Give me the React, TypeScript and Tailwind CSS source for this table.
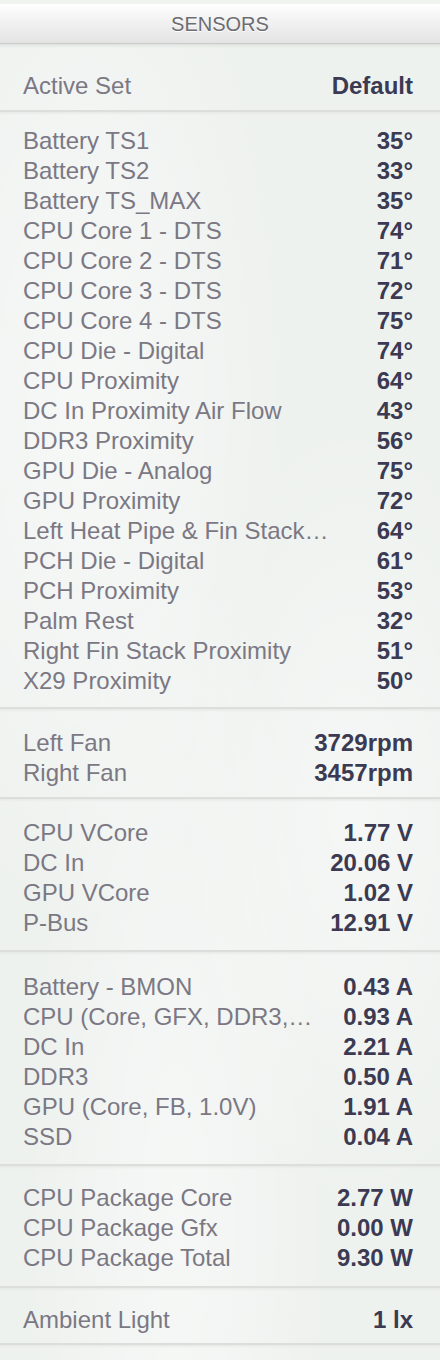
import React from "react";

type Row = [string, string];

const Sep = () => (
  <div className="relative h-[2px] bg-[#dcdedc]">
    <div className="absolute left-0 right-0 top-[2px] h-[3px] bg-gradient-to-b from-[#e6e9e6] to-transparent" />
  </div>
);

const Rows = ({ rows }: { rows: Row[] }) => (
  <div className="flex flex-col">
    {rows.map(([l, v]) => (
      <div key={l} className="flex h-[30px] items-start justify-between pl-[23px] pr-[27px] pt-[4px] leading-[26px]">
        <span className="whitespace-nowrap text-[24px] text-[#7b7884]">{l}</span>
        <span className="whitespace-nowrap text-[24px] font-bold text-[#3b3a52]">{v}</span>
      </div>
    ))}
  </div>
);

const temps: Row[] = [
  ["Battery TS1", "35°"],
  ["Battery TS2", "33°"],
  ["Battery TS_MAX", "35°"],
  ["CPU Core 1 - DTS", "74°"],
  ["CPU Core 2 - DTS", "71°"],
  ["CPU Core 3 - DTS", "72°"],
  ["CPU Core 4 - DTS", "75°"],
  ["CPU Die - Digital", "74°"],
  ["CPU Proximity", "64°"],
  ["DC In Proximity Air Flow", "43°"],
  ["DDR3 Proximity", "56°"],
  ["GPU Die - Analog", "75°"],
  ["GPU Proximity", "72°"],
  ["Left Heat Pipe & Fin Stack…", "64°"],
  ["PCH Die - Digital", "61°"],
  ["PCH Proximity", "53°"],
  ["Palm Rest", "32°"],
  ["Right Fin Stack Proximity", "51°"],
  ["X29 Proximity", "50°"],
];

const fans: Row[] = [
  ["Left Fan", "3729rpm"],
  ["Right Fan", "3457rpm"],
];

const volts: Row[] = [
  ["CPU VCore", "1.77 V"],
  ["DC In", "20.06 V"],
  ["GPU VCore", "1.02 V"],
  ["P-Bus", "12.91 V"],
];

const amps: Row[] = [
  ["Battery - BMON", "0.43 A"],
  ["CPU (Core, GFX, DDR3,…", "0.93 A"],
  ["DC In", "2.21 A"],
  ["DDR3", "0.50 A"],
  ["GPU (Core, FB, 1.0V)", "1.91 A"],
  ["SSD", "0.04 A"],
];

const power: Row[] = [
  ["CPU Package Core", "2.77 W"],
  ["CPU Package Gfx", "0.00 W"],
  ["CPU Package Total", "9.30 W"],
];

export default function App() {
  return (
    <div
      className="h-[1360px] w-[440px] overflow-hidden bg-[#eef2ef] bg-[radial-gradient(ellipse_at_20%_30%,rgba(255,255,255,0.5),transparent_40%),radial-gradient(ellipse_at_80%_60%,rgba(255,255,255,0.4),transparent_35%),radial-gradient(ellipse_at_40%_90%,rgba(255,255,255,0.45),transparent_40%)]"
      style={{ fontFamily: '"Liberation Sans", Arial, sans-serif' }}
    >
      <div className="h-[4px] bg-[#f1f3f1]" />
      <div className="relative flex h-[40px] items-center justify-center border-b border-[#c9c9c9] bg-gradient-to-b from-[#ffffff] via-[#f0f0f0] to-[#e4e4e4]">
        <span className="text-[20px] text-[#6c6c71] [text-shadow:0_1px_0_#ffffff]">SENSORS</span>
        <div className="absolute left-0 right-0 top-[40px] h-[4px] bg-gradient-to-b from-[#dfe2df] to-transparent" />
      </div>
      <div className="pt-[25px] pb-[11px]">
        <Rows rows={[["Active Set", "Default"]]} />
      </div>
      <Sep />
      <div className="pt-[12px] pb-[13px]">
        <Rows rows={temps} />
      </div>
      <Sep />
      <div className="pt-[17px] pb-[11px]">
        <Rows rows={fans} />
      </div>
      <Sep />
      <div className="pt-[17px] pb-[14px]">
        <Rows rows={volts} />
      </div>
      <Sep />
      <div className="pt-[18px] pb-[14px]">
        <Rows rows={amps} />
      </div>
      <Sep />
      <div className="pt-[15px] pb-[15px]">
        <Rows rows={power} />
      </div>
      <Sep />
      <div className="pt-[15px] pb-[10px]">
        <Rows rows={[["Ambient Light", "1 lx"]]} />
      </div>
      <Sep />
    </div>
  );
}
